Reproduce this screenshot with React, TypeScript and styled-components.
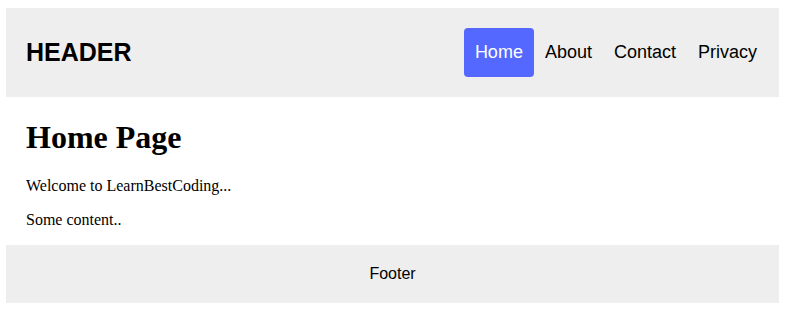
import React from 'react'
import styled, { createGlobalStyle } from 'styled-components'

const GlobalStyle = createGlobalStyle`
  body {
    margin: 8px 6px;
    font-family: "Liberation Serif", "Times New Roman", serif;
    background: #ffffff;
    color: #000000;
  }
`

const Header = styled.header`
  display: flex;
  align-items: center;
  justify-content: space-between;
  padding: 20px 11px 20px 20px;
  background: #eeeeee;
  font-family: "Liberation Sans", Arial, sans-serif;
`

const Logo = styled.div`
  font-size: 25px;
  font-weight: bold;
  line-height: 25px;
`

const Nav = styled.nav`
  display: flex;
`

const NavLink = styled.a<{ $active?: boolean }>`
  padding: 12px 11px;
  font-size: 18px;
  line-height: 25px;
  border-radius: 4px;
  text-decoration: none;
  color: ${({ $active }) => ($active ? '#ffffff' : '#000000')};
  background: ${({ $active }) => ($active ? '#5468ff' : 'transparent')};
  cursor: pointer;
`

const Main = styled.main`
  padding: 0 20px;
  overflow: hidden;

  h1 {
    font-size: 32px;
    margin: 22px 0 21px;
  }

  p {
    font-size: 16px;
    margin: 16px 0;
  }
`

const Footer = styled.footer`
  padding: 20px;
  background: #eeeeee;
  text-align: center;
  font-family: "Liberation Sans", Arial, sans-serif;
  font-size: 16px;
`

const links = ['Home', 'About', 'Contact', 'Privacy']

export default function App(): JSX.Element {
  return (
    <>
      <GlobalStyle />
      <Header>
        <Logo>HEADER</Logo>
        <Nav>
          {links.map((l) => (
            <NavLink key={l} $active={l === 'Home'}>
              {l}
            </NavLink>
          ))}
        </Nav>
      </Header>
      <Main>
        <h1>Home Page</h1>
        <p>Welcome to LearnBestCoding...</p>
        <p>Some content..</p>
      </Main>
      <Footer>Footer</Footer>
    </>
  )
}
